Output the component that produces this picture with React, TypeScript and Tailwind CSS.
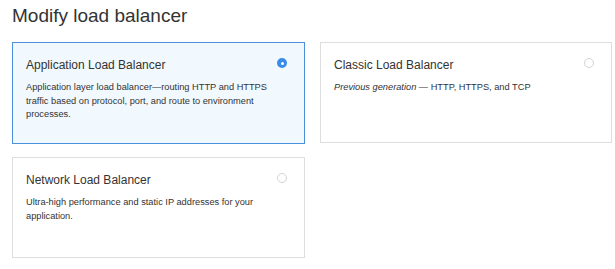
const options = [
  {
    id: "application",
    title: "Application Load Balancer",
    description: (
      <>
        Application layer load balancer—routing HTTP and HTTPS traffic based on
        protocol, port, and route to environment processes.
      </>
    ),
  },
  {
    id: "classic",
    title: "Classic Load Balancer",
    description: (
      <>
        <i>Previous generation</i> — HTTP, HTTPS, and TCP
      </>
    ),
  },
  {
    id: "network",
    title: "Network Load Balancer",
    description: (
      <>Ultra-high performance and static IP addresses for your application.</>
    ),
  },
];

function Radio({ checked }: { checked: boolean }) {
  if (checked) {
    return (
      <span className="flex h-[10px] w-[10px] items-center justify-center rounded-full bg-[#3a8cec]">
        <span className="h-[3px] w-[3px] rounded-full bg-white" />
      </span>
    );
  }
  return (
    <span className="block h-[10px] w-[10px] rounded-full border border-[#d4d4d4] bg-white" />
  );
}

export default function App() {
  const selected = "application";

  return (
    <div className="min-h-[269px] w-[615px] bg-white px-3 pt-[4px] font-['Liberation_Sans',Arial,sans-serif] text-[#333]">
      <h1 className="text-[19px] leading-[24px] font-normal text-[#333]">
        Modify load balancer
      </h1>
      <div className="mt-[14px] grid grid-cols-[293px_292px] gap-x-[15px] gap-y-[13px]">
        {options.map((o) => {
          const isSel = o.id === selected;
          return (
            <div
              key={o.id}
              className={
                isSel
                  ? "h-[102px] border border-[#4a90dc] bg-[#f1f8fe] pl-[13px] pr-[17px] pt-[14px]"
                  : "h-[101px] border border-[#dedede] bg-white pl-[13px] pr-[17px] pt-[14px]"
              }
            >
              <div className="flex items-start justify-between">
                <div className="text-[12px] leading-[16px] text-[#333]">
                  {o.title}
                </div>
                <div className="mt-[1px]">
                  <Radio checked={isSel} />
                </div>
              </div>
              <p className="mt-[8px] max-w-[255px] text-[9.25px] leading-[13.5px] text-[#333]">
                {o.description}
              </p>
            </div>
          );
        })}
      </div>
    </div>
  );
}
